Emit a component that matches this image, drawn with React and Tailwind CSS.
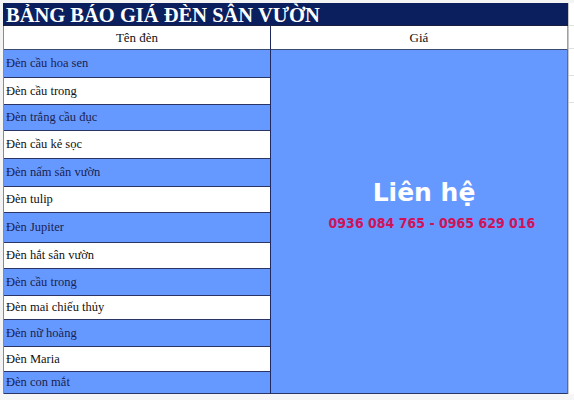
import React from "react";

const rows = [
  { name: "Đèn cầu hoa sen", h: 28, blue: true },
  { name: "Đèn cầu trong", h: 27, blue: false },
  { name: "Đèn trắng cầu đục", h: 26, blue: true },
  { name: "Đèn cầu kẻ sọc", h: 28, blue: false },
  { name: "Đèn nấm sân vườn", h: 28, blue: true },
  { name: "Đèn tulip", h: 26, blue: false },
  { name: "Đèn Jupiter", h: 30, blue: true },
  { name: "Đèn hắt sân vườn", h: 26, blue: false },
  { name: "Đèn cầu trong", h: 27, blue: true },
  { name: "Đèn mai chiếu thủy", h: 24, blue: false },
  { name: "Đèn nữ hoàng", h: 27, blue: true },
  { name: "Đèn Maria", h: 25, blue: false },
  { name: "Đèn con mắt", h: 22, blue: true },
];

export default function App() {
  return (
    <div className="w-[574px] h-[400px] bg-white overflow-hidden flex flex-col">
      <div className="h-[3px] bg-[#f4f4f4]" />
      <div className="flex">
        <div className="w-[3px] bg-[#f4f4f4]" />
        <div className="w-[565px] flex flex-col">
          <div className="h-[22px] bg-[#0b1f5e] text-white font-bold text-[20.5px] leading-[25px] pl-[3px] whitespace-nowrap font-['Liberation_Serif',serif]">
            BẢNG BÁO GIÁ ĐÈN SÂN VƯỜN
          </div>
          <div className="flex border-t border-[#1a2040]">
            <div className="w-[267px] flex flex-col border-l border-[#8a8a8a]">
              <div className="h-[24px] bg-white flex items-center justify-center text-[#111] text-[13px] font-['Liberation_Serif',serif] border-b border-[#3a4a70]">
                Tên đèn
              </div>
              {rows.map((r, i) => (
                <div
                  key={i}
                  style={{ height: r.h }}
                  className={
                    r.blue
                      ? "bg-[#6699ff] text-[#1a1f4f] text-[12.5px] font-['Liberation_Serif',serif] flex items-center pl-[2px] border-b border-[#2a3566]"
                      : "bg-white text-[#111] text-[12.5px] font-['Liberation_Serif',serif] flex items-center pl-[2px] border-b border-[#2a3566]"
                  }
                >
                  {r.name}
                </div>
              ))}
            </div>
            <div className="flex-1 flex flex-col border-l border-[#1e2a60]">
              <div className="h-[24px] bg-white flex items-center justify-center text-[#111] text-[13px] font-['Liberation_Serif',serif] border-b border-[#3a4a70] border-r border-r-[#9aa0b0]">
                Giá
              </div>
              <div className="flex-1 bg-[#6699ff] flex flex-col items-center justify-center border-b border-[#2a3566] border-r border-r-[#5a6a9a] pb-[33px] pl-[10px]">
                <div className="text-white font-bold text-[25px] leading-[28px] font-['DejaVu_Sans',sans-serif]">
                  Liên hệ
                </div>
                <div className="text-[#d01258] font-bold text-[14px] leading-[18px] mt-[7px] ml-[16px] font-['DejaVu_Sans_Condensed','DejaVu_Sans',sans-serif]">
                  0936 084 765 - 0965 629 016
                </div>
              </div>
            </div>
          </div>
        </div>
        <div className="flex-1 flex flex-col border-l border-[#c8c8c8]">
          <div className="h-[22px]" />
          <div className="h-[24px] border-t border-[#1a2040] border-b border-[#e0e0e0]" />
          <div className="h-[27px] border-b border-[#e0e0e0]" />
          <div className="h-[27px] border-b border-[#e0e0e0]" />
        </div>
      </div>
      <div className="flex-1 bg-[#f6f6f6]" />
    </div>
  );
}
